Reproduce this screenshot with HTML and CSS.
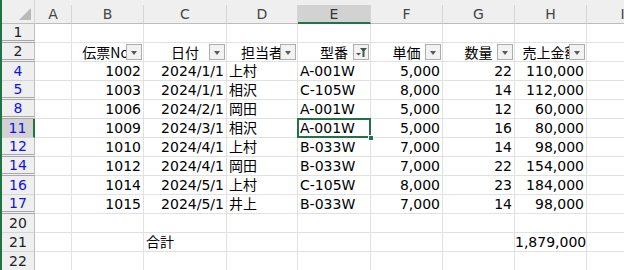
FILE: index.html
```html
<!DOCTYPE html>
<html>
<head>
  <meta charset="UTF-8">
  <title>売上一覧</title>
  <link rel="stylesheet" href="styles.css">
</head>
<body>
  <div class="sheet">
    <!-- column letters -->
    <div class="row colhead">
      <div class="corner"></div>
      <div class="c">A</div>
      <div class="c">B</div>
      <div class="c">C</div>
      <div class="c">D</div>
      <div class="c sel">E</div>
      <div class="c">F</div>
      <div class="c">G</div>
      <div class="c">H</div>
      <div class="c last">I</div>
    </div>

    <div class="row hidden-after">
      <div class="rh">1</div>
      <div></div><div></div><div></div><div></div><div></div><div></div><div></div><div></div><div></div>
    </div>

    <!-- table header with filter buttons -->
    <div class="row gap">
      <div class="rh">2</div>
      <div></div>
      <div class="hd">伝票No.<span class="drop"></span></div>
      <div class="hd">日付<span class="drop"></span></div>
      <div class="hd">担当者<span class="drop"></span></div>
      <div class="hd">型番<span class="drop filtered">
        <svg width="14" height="14" viewBox="0 0 14 14">
          <polygon points="2,8 7,8 4.5,10.5" fill="#505050"/>
          <polygon points="6,3 13,3 10.5,6 10.5,12 8.5,12 8.5,6" fill="#3b5a4a"/>
        </svg>
      </span></div>
      <div class="hd">単価<span class="drop"></span></div>
      <div class="hd">数量<span class="drop"></span></div>
      <div class="hd">売上金額<span class="drop"></span></div>
      <div></div>
    </div>

    <div class="row">
      <div class="rh blue">4</div>
      <div></div>
      <div class="num">1002</div><div class="num">2024/1/1</div><div class="txt">上村</div><div class="txt">A-001W</div>
      <div class="num">5,000</div><div class="num">22</div><div class="num">110,000</div><div></div>
    </div>
    <div class="row gap">
      <div class="rh blue">5</div>
      <div></div>
      <div class="num">1003</div><div class="num">2024/1/1</div><div class="txt">相沢</div><div class="txt">C-105W</div>
      <div class="num">8,000</div><div class="num">14</div><div class="num">112,000</div><div></div>
    </div>
    <div class="row gap">
      <div class="rh blue">8</div>
      <div></div>
      <div class="num">1006</div><div class="num">2024/2/1</div><div class="txt">岡田</div><div class="txt">A-001W</div>
      <div class="num">5,000</div><div class="num">12</div><div class="num">60,000</div><div></div>
    </div>
    <div class="row">
      <div class="rh blue cur">11</div>
      <div></div>
      <div class="num">1009</div><div class="num">2024/3/1</div><div class="txt">相沢</div><div class="txt active">A-001W</div>
      <div class="num">5,000</div><div class="num">16</div><div class="num">80,000</div><div></div>
    </div>
    <div class="row gap">
      <div class="rh blue">12</div>
      <div></div>
      <div class="num">1010</div><div class="num">2024/4/1</div><div class="txt">上村</div><div class="txt">B-033W</div>
      <div class="num">7,000</div><div class="num">14</div><div class="num">98,000</div><div></div>
    </div>
    <div class="row gap">
      <div class="rh blue">14</div>
      <div></div>
      <div class="num">1012</div><div class="num">2024/4/1</div><div class="txt">岡田</div><div class="txt">B-033W</div>
      <div class="num">7,000</div><div class="num">22</div><div class="num">154,000</div><div></div>
    </div>
    <div class="row">
      <div class="rh blue">16</div>
      <div></div>
      <div class="num">1014</div><div class="num">2024/5/1</div><div class="txt">上村</div><div class="txt">C-105W</div>
      <div class="num">8,000</div><div class="num">23</div><div class="num">184,000</div><div></div>
    </div>
    <div class="row gap">
      <div class="rh blue">17</div>
      <div></div>
      <div class="num">1015</div><div class="num">2024/5/1</div><div class="txt">井上</div><div class="txt">B-033W</div>
      <div class="num">7,000</div><div class="num">14</div><div class="num">98,000</div><div></div>
    </div>

    <div class="row">
      <div class="rh">20</div>
      <div></div><div></div><div></div><div></div><div></div><div></div><div></div><div></div><div></div>
    </div>
    <div class="row">
      <div class="rh">21</div>
      <div></div><div></div>
      <div class="txt">合計</div>
      <div></div><div></div><div></div><div></div>
      <div class="num">1,879,000</div><div></div>
    </div>
    <div class="row">
      <div class="rh">22</div>
      <div></div><div></div><div></div><div></div><div></div><div></div><div></div><div></div><div></div>
    </div>
  </div>
</body>
</html>
```

FILE: styles.css
```css
html, body {
  margin: 0;
  background: #fff;
}

body {
  font-family: "DejaVu Sans", "Noto Sans CJK JP", sans-serif;
  font-size: 14px;
  color: #000;
}

.sheet {
  width: 624px;
  height: 270px;
  overflow: hidden;
  border-left: 2px solid #217346;
  box-sizing: border-box;
}

.row {
  display: grid;
  grid-template-columns: 33px 37px 72px 83px 71px 73px 72px 72px 72px 72px;
  height: 19px;
}

.row > div {
  box-sizing: border-box;
  border-right: 1px solid #e1e1e1;
  border-bottom: 1px solid #e1e1e1;
  line-height: 18px;
  white-space: nowrap;
  overflow: hidden;
  position: relative;
}

/* column letters */
.colhead {
  height: 24px;
  align-items: end;
  background: #efefef;
}

.row.colhead > div {
  border-bottom: 1px solid #bdbdbd;
  border-right: 1px solid #d5d5d5;
}

.colhead .c {
  height: 19px;
  text-align: center;
  color: #444;
  font-size: 14px;
}

.colhead .c.sel {
  background: #d2d2d2;
  color: #333;
  border-bottom: 2px solid #217346;
}

.colhead .corner {
  height: 24px;
}

.colhead .corner::after {
  content: "";
  position: absolute;
  right: 3px;
  bottom: 3px;
  border-style: solid;
  border-width: 0 0 12px 12px;
  border-color: transparent transparent #b9b9b9 transparent;
}

/* row numbers */
.row > .rh {
  background: #efefef;
  text-align: center;
  color: #222;
  border-right: 1px solid #bdbdbd;
  border-bottom: 1px solid #d5d5d5;
}

.row.gap > .rh,
.row.hidden-after > .rh {
  border-bottom: 3px double #a8a8a8;
  line-height: 16px;
}

.rh.blue {
  color: #1010ee;
}

.row > .rh.cur {
  background: #d2d2d2;
  border-right: 2px solid #217346;
}

/* cells */
.num {
  text-align: right;
  padding-right: 2px;
}

.txt {
  padding-left: 2px;
  font-family: "DejaVu Sans", "Noto Sans CJK JP", sans-serif;
}

.hd {
  text-align: center;
  font-family: "Noto Sans CJK JP", sans-serif;
}

.drop {
  position: absolute;
  right: 1px;
  top: 1px;
  width: 16px;
  height: 16px;
  box-sizing: border-box;
  border: 1px solid #acacac;
  background: #f2f2f2;
}

.drop::after {
  content: "";
  position: absolute;
  left: 4px;
  top: 6px;
  border-style: solid;
  border-width: 4px 3.5px 0 3.5px;
  border-color: #5a5a5a transparent transparent transparent;
}

.drop.filtered::after {
  display: none;
}

.drop svg {
  display: block;
  margin: 0;
}

/* selected cell */
.row > .active {
  overflow: visible;
  z-index: 2;
}

.active::before {
  content: "";
  position: absolute;
  left: -1px;
  top: -1px;
  right: -1px;
  bottom: -1px;
  border: 2px solid #217346;
}

.active::after {
  content: "";
  position: absolute;
  right: -4px;
  bottom: -4px;
  width: 6px;
  height: 6px;
  background: #217346;
  border: 1px solid #fff;
  box-sizing: border-box;
}
```
